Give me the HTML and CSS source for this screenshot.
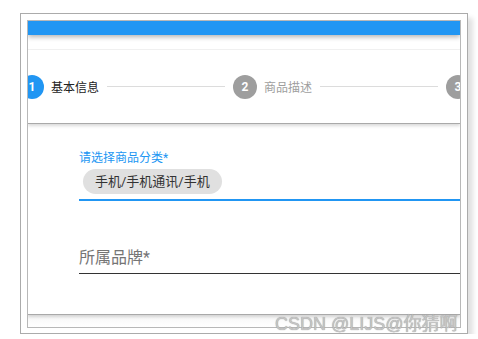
FILE: index.html
```html
<!DOCTYPE html>
<html lang="zh">
<head>
  <meta charset="UTF-8">
  <meta name="viewport" content="width=device-width, initial-scale=1.0">
  <title>商品发布</title>
  <link rel="stylesheet" href="styles.css">
</head>
<body>
  <div class="frame">
    <div class="window">
      <div class="appbar"></div>
      <div class="appbar-gap"></div>

      <div class="stepper">
        <div class="steps">
          <div class="step active">
            <span class="step-num">1</span>
            <span class="step-label">基本信息</span>
          </div>
          <div class="step-line"></div>
          <div class="step">
            <span class="step-num">2</span>
            <span class="step-label">商品描述</span>
          </div>
          <div class="step-line"></div>
          <div class="step">
            <span class="step-num">3</span>
          </div>
        </div>
      </div>

      <div class="panel">
        <div class="field focused">
          <label class="field-label">请选择商品分类*</label>
          <div class="chip">手机/手机通讯/手机</div>
        </div>
        <div class="field">
          <label class="field-placeholder">所属品牌*</label>
        </div>
      </div>

      <div class="panel-foot"></div>
    </div>
  </div>

  <div class="watermark">CSDN @LIJS@你猜啊</div>
</body>
</html>
```

FILE: styles.css
```css
body {
  margin: 0;
  padding: 13px 0 0 20px;
  background: #fff;
  font-family: Roboto, "Noto Sans CJK SC", sans-serif;
  color: #222;
}
.frame {
  width: 434px;
  height: 307px;
  padding: 6px;
  border: 1px solid #ababab;
  background: #fff;
  box-shadow: 5px 5px 5px rgba(0,0,0,0.12);
}
.window {
  height: 306px;
  border: 1px solid #b8b8b8;
  background: #fff;
  overflow: hidden;
  display: flex;
  flex-direction: column;
}
.appbar {
  height: 14px;
  background: #2196f3;
  box-shadow: 0 2px 5px rgba(0,0,0,0.3);
  position: relative;
  z-index: 2;
}
.appbar-gap {
  height: 14px;
  background: #fff;
  border-bottom: 1px solid #f2f2f2;
}
.stepper {
  height: 73px;
  border-bottom: 1px solid #a9a9a9;
  box-shadow: 0 2px 3px rgba(0,0,0,0.15);
  display: flex;
  align-items: center;
  overflow: hidden;
  position: relative;
  z-index: 1;
}
.steps {
  display: flex;
  align-items: center;
  margin-left: -8px;
  flex-shrink: 0;
}
.step {
  display: flex;
  align-items: center;
  gap: 7px;
}
.step-num {
  width: 24px;
  height: 24px;
  border-radius: 50%;
  background: #9e9e9e;
  color: #fff;
  font-size: 12px;
  font-weight: bold;
  display: flex;
  align-items: center;
  justify-content: center;
}
.step-label {
  font-size: 12px;
  color: #9e9e9e;
}
.step.active .step-num {
  background: #2196f3;
}
.step.active .step-label {
  color: #222;
}
.step-line {
  width: 118px;
  height: 1px;
  background: #dcdcdc;
  margin: 0 8px;
}
.panel {
  height: 164px;
  padding: 26px 0 0 51px;
  border-bottom: 1px solid #a9a9a9;
  box-shadow: 0 2px 3px rgba(0,0,0,0.15);
  position: relative;
}
.field {
  padding-bottom: 5px;
  border-bottom: 1px solid #333;
}
.field.focused {
  border-bottom: 2px solid #2196f3;
  margin-bottom: 47px;
}
.field-label {
  display: block;
  font-size: 12px;
  line-height: 16px;
  color: #2196f3;
}
.chip {
  display: inline-block;
  margin: 3px 0 0 4px;
  height: 25px;
  line-height: 25px;
  padding: 0 12px;
  border-radius: 13px;
  background: #e0e0e0;
  color: #333;
  font-size: 13px;
}
.field-placeholder {
  display: block;
  font-size: 16px;
  line-height: 20px;
  color: #757575;
}
.panel-foot {
  flex: 1;
  background: linear-gradient(#f7f7f7, #fff);
}
.watermark {
  position: absolute;
  left: 275px;
  top: 309px;
  font-family: "Liberation Sans", "Noto Sans CJK SC", sans-serif;
  font-size: 18px;
  color: #c4c4c4;
  text-shadow: 0 0 1px #8a8a8a;
  white-space: nowrap;
}
```
